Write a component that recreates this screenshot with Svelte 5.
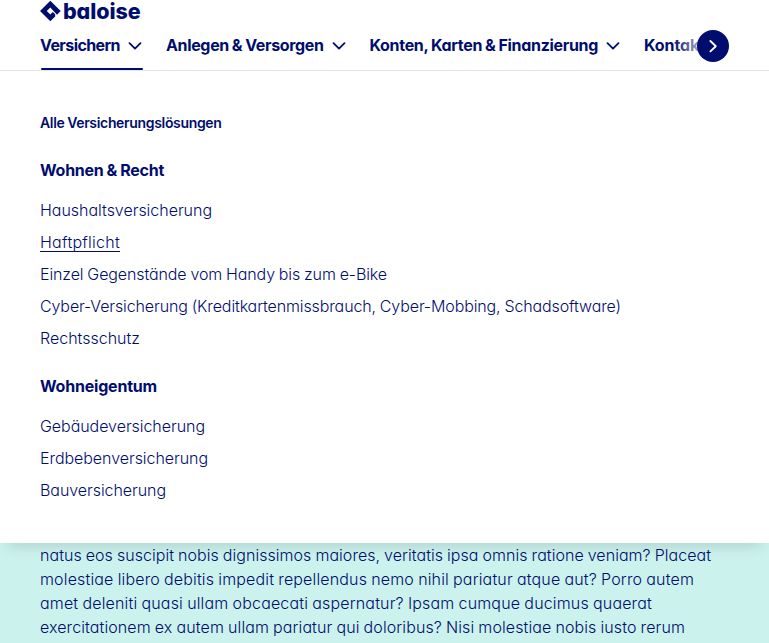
<script>
  const nav = [
    { label: 'Versichern', width: 80, active: true },
    { label: 'Anlegen & Versorgen', width: 157.5 },
    { label: 'Konten, Karten & Finanzierung', width: 228.5 },
    { label: 'Kontakt', width: 61, last: true }
  ];
  const groups = [
    {
      title: 'Wohnen & Recht', width: 124,
      links: [
        ['Haushaltsversicherung', 172],
        ['Haftpflicht', 80],
        ['Einzel Gegenstände vom Handy bis zum e-Bike', 347],
        ['Cyber-Versicherung (Kreditkartenmissbrauch, Cyber-Mobbing, Schadsoftware)', 581],
        ['Rechtsschutz', 100]
      ]
    },
    {
      title: 'Wohneigentum', width: 117,
      links: [
        ['Gebäudeversicherung', 165],
        ['Erdbebenversicherung', 168],
        ['Bauversicherung', 126]
      ]
    }
  ];
  const copy = [
    ['natus eos suscipit nobis dignissimos maiores, veritatis ipsa omnis ratione veniam? Placeat', 671],
    ['molestiae libero debitis impedit repellendus nemo nihil pariatur atque aut? Porro autem', 654],
    ['amet deleniti quasi ullam obcaecati aspernatur? Ipsam cumque ducimus quaerat', 612],
    ['exercitationem ex autem ullam pariatur qui doloribus? Nisi molestiae nobis iusto rerum', 645]
  ];

  // Tracks a line of text so that it sets to the given measure.
  function track(node, width) {
    const natural = node.getBoundingClientRect().width;
    node.style.letterSpacing = `${(width - natural) / node.textContent.length}px`;
  }
</script>

<div class="page">
  <header>
    <a class="logo" href="#home" aria-label="baloise">
      <svg width="21" height="22" viewBox="0 0 21 22"><path d="M10.3 .7 L20.7 11 L17 14.7 L10.3 7.5 L6.8 11 L10.3 14.5 L12.8 12 L15.2 14.3 V16.4 L10.3 21.3 L0 11 Z" fill="#000d6e" /></svg>
      <span use:track={77.5}>baloise</span>
    </a>
    <nav>
      {#each nav as item}
        <a href="#nav" class:active={item.active}>
          <span class="label" use:track={item.width}>{item.label}</span>
          {#if !item.last}
            <svg width="14" height="8" viewBox="0 0 14 8"><path d="M1.5 1.2 L7 6.6 L12.5 1.2" fill="none" stroke="#000d6e" stroke-width="1.8" stroke-linecap="round" stroke-linejoin="round" /></svg>
          {/if}
        </a>
      {/each}
    </nav>
    <div class="fade"></div>
    <button aria-label="Weiter">
      <svg width="32" height="32" viewBox="0 0 32 32"><path d="M13.4 11 L18.8 16.2 L13.4 21.4" fill="none" stroke="#fff" stroke-width="1.9" stroke-linecap="round" stroke-linejoin="round" /></svg>
    </button>
  </header>

  <main>
    <a class="all" href="#all"><span use:track={181.5}>Alle Versicherungslösungen</span></a>
    {#each groups as group}
      <section>
        <h2><span use:track={group.width}>{group.title}</span></h2>
        <ul>
          {#each group.links as [label, width]}
            <li><a href="#link" class:hovered={label === 'Haftpflicht'} use:track={width}>{label}</a></li>
          {/each}
        </ul>
      </section>
    {/each}
  </main>

  <article>
    {#each copy as [line, width]}
      <div><span use:track={width}>{line}</span></div>
    {/each}
  </article>
</div>

<style>
  :global(body) { margin: 0; overflow: hidden; }
  .page {
    width: 769px; height: 643px; overflow: hidden;
    display: flex; flex-direction: column;
    background: #cbf2ec; color: #000d6e;
    font: 350 16px/24px Inter, sans-serif;
    font-feature-settings: 'cv11';
    word-spacing: -0.5px;
  }
  a { color: inherit; text-decoration: none; }
  header {
    position: relative; box-sizing: border-box; height: 71px; flex: none;
    padding-left: 40px; background: #fff; border-bottom: 1px solid #e5e5e5;
  }
  .logo { display: flex; align-items: center; gap: 2px; height: 22px; }
  .logo svg { flex: none; }
  .logo span { font-size: 21.5px; font-weight: 800; line-height: 22px; padding-bottom: 1px; white-space: nowrap; }
  nav { display: flex; gap: 24px; height: 48px; width: 729px; white-space: nowrap; }
  nav a { display: flex; flex: none; align-items: center; gap: 8px; height: 48px; box-sizing: border-box; font-weight: 700; position: relative; }
  .label { padding-bottom: 2px; }
  nav a.active::after { content: ''; position: absolute; left: 1px; right: -1px; bottom: 0; height: 2px; background: #000d6e; border-radius: 1px; }
  .fade { position: absolute; left: 673px; top: 30px; width: 96px; height: 32px; background: linear-gradient(90deg, #fff0, #fff 40px); }
  button { position: absolute; left: 697px; top: 30px; width: 32px; height: 32px; padding: 0; border: 0; border-radius: 50%; background: #000d6e; }
  button svg { display: block; }
  main {
    position: relative; box-sizing: border-box; height: 472px; flex: none;
    padding: 40px 40px 0; background: #fff; box-shadow: 0 10px 14px -8px rgba(0, 20, 40, .15);
  }
  .all { display: block; height: 24px; font-size: 14px; font-weight: 600; }
  section { padding-top: 23px; }
  section + section { padding-top: 20px; }
  h2 { margin: 0 0 12px; font-size: 16px; line-height: 24px; font-weight: 700; }
  ul { list-style: none; margin: 0; padding: 0; }
  li { height: 32px; line-height: 32px; white-space: nowrap; }
  .hovered { text-decoration: underline; text-decoration-thickness: 1px; text-underline-offset: 3px; }
  article { padding-left: 40px; white-space: nowrap; }
</style>
